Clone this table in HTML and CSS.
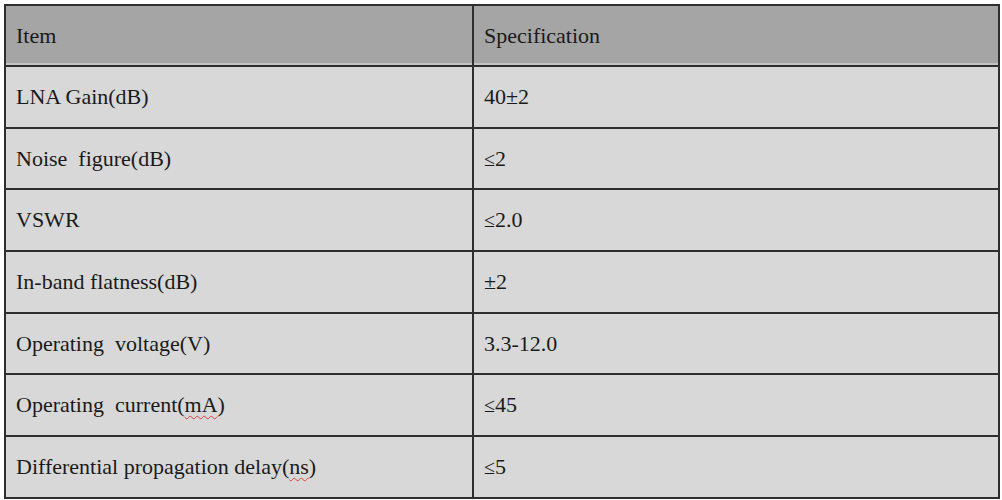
FILE: index.html
```html
<!DOCTYPE html>
<html>
<head>
<meta charset="utf-8">
<link rel="stylesheet" href="styles.css">
</head>
<body>
<div class="page">
  <h2 class="title">Technical Specifications</h2>
  <table class="spec">
    <colgroup><col class="c1"><col class="c2"></colgroup>
    <thead>
      <tr><th>Item</th><th>Specification</th></tr>
    </thead>
    <tbody>
      <tr><td>LNA Gain(dB)</td><td>40±2</td></tr>
      <tr><td>Noise&nbsp; figure(dB)</td><td><span class="le">≤</span>2</td></tr>
      <tr><td>VSWR</td><td><span class="le">≤</span>2.0</td></tr>
      <tr><td>In-band flatness(dB)</td><td>±2</td></tr>
      <tr><td>Operating&nbsp; voltage(V)</td><td>3.3-12.0</td></tr>
      <tr><td>Operating&nbsp; current(<span class="sp">mA</span>)</td><td><span class="le">≤</span>45</td></tr>
      <tr><td>Differential propagation delay(<span class="sp">ns</span>)</td><td><span class="le">≤</span>5</td></tr>
    </tbody>
  </table>
</div>
</body>
</html>
```

FILE: styles.css
```css
html, body {
  margin: 0;
  padding: 0;
  background: #ffffff;
  overflow: hidden;
}
.page {
  padding: 0 4px;
  font-family: "Liberation Serif", "Times New Roman", serif;
  color: #1a1a1a;
}
.title {
  margin: -24px 0 0 0;
  height: 28px;
  font-size: 22px;
  font-weight: bold;
  line-height: 24px;
  color: #1a1a1a;
}
.spec {
  width: 994px;
  border-collapse: collapse;
  table-layout: fixed;
  font-size: 22px;
  border: 2px solid #2e2e2e;
}
.c1 { width: 468px; }
.c2 { width: 526px; }
.spec th, .spec td {
  border: 2px solid #2e2e2e;
  padding: 0 0 0 10px;
  text-align: left;
  vertical-align: middle;
  font-weight: normal;
  height: 59.7px;
}
.spec th {
  background: #a5a5a5;
  box-shadow: inset 0 -2px 0 #c4c4c4;
  height: 59px;
}
.spec td {
  background: #d8d8d8;
}
.le {
  font-size: 20px;
}
.sp {
  text-decoration: underline wavy #e0403a;
  text-decoration-thickness: 1px;
  text-underline-offset: 3px;
}
```
